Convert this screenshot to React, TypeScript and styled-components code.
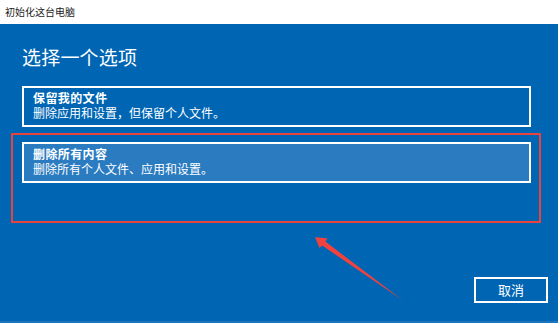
import React from "react";
import styled, { createGlobalStyle } from "styled-components";

const Global = createGlobalStyle`
  html, body { margin: 0; padding: 0; width: 558px; height: 323px; overflow: hidden; }
  body { font-family: "Noto Sans CJK SC", "Noto Sans", sans-serif; }
  * { box-sizing: border-box; }
`;

const Window = styled.div`
  position: relative;
  width: 558px;
  height: 323px;
  display: flex;
  flex-direction: column;
  background: #ffffff;
`;

const TitleBar = styled.div`
  height: 24px;
  display: flex;
  align-items: center;
  padding-left: 5px;
  font-size: 10px;
  line-height: 12px;
  color: #1a1a1a;
  background: #ffffff;
`;

const Body = styled.div`
  flex: 1;
  display: flex;
  flex-direction: column;
  padding: 21px 10px 18px 22px;
  background: #0066b3;
  border-bottom: 2px solid #1b76c2;
  color: #ffffff;
`;

const Heading = styled.h1`
  margin: 0 0 17px 0;
  font-size: 19px;
  line-height: 24px;
  font-weight: 400;
  letter-spacing: 0.2px;
`;

const OptionList = styled.div`
  display: flex;
  flex-direction: column;
  gap: 15px;
  margin-right: 17px;
`;

const Option = styled.div<{ $selected?: boolean }>`
  height: 41px;
  border: 2px solid #ffffff;
  padding: 3px 10px 0 9px;
  background: ${(p) => (p.$selected ? "#2a7bc0" : "transparent")};
  display: flex;
  flex-direction: column;
`;

const OptionTitle = styled.div`
  font-size: 12px;
  line-height: 14px;
  font-weight: 700;
  letter-spacing: 0.4px;
`;

const OptionDesc = styled.div`
  font-size: 12px;
  line-height: 15px;
  font-weight: 400;
`;

const Spacer = styled.div`
  flex: 1;
`;

const Footer = styled.div`
  display: flex;
  justify-content: flex-end;
`;

const CancelButton = styled.button`
  width: 74px;
  height: 26px;
  border: 2px solid #ffffff;
  background: transparent;
  color: #ffffff;
  font-family: "Noto Sans CJK SC", "Noto Sans", sans-serif;
  font-size: 13px;
  line-height: 16px;
  padding: 0;
  cursor: pointer;
`;

const Highlight = styled.div`
  position: absolute;
  left: 11px;
  top: 133px;
  width: 530px;
  height: 90px;
  border: 2px solid #e8423f;
  pointer-events: none;
`;

const ArrowLayer = styled.svg`
  position: absolute;
  left: 0;
  top: 0;
  width: 558px;
  height: 323px;
  pointer-events: none;
`;

export default function App() {
  return (
    <>
      <Global />
      <Window>
        <TitleBar>初始化这台电脑</TitleBar>
        <Body>
          <Heading>选择一个选项</Heading>
          <OptionList>
            <Option>
              <OptionTitle>保留我的文件</OptionTitle>
              <OptionDesc>删除应用和设置，但保留个人文件。</OptionDesc>
            </Option>
            <Option $selected>
              <OptionTitle>删除所有内容</OptionTitle>
              <OptionDesc>删除所有个人文件、应用和设置。</OptionDesc>
            </Option>
          </OptionList>
          <Spacer />
          <Footer>
            <CancelButton>取消</CancelButton>
          </Footer>
        </Body>
        <Highlight />
        <ArrowLayer viewBox="0 0 558 323">
          <polygon
            points="315,237 327.5,238.5 325.4,241.6 403,300.5 322.2,245.6 319.5,248"
            fill="#f0423f"
          />
        </ArrowLayer>
      </Window>
    </>
  );
}
